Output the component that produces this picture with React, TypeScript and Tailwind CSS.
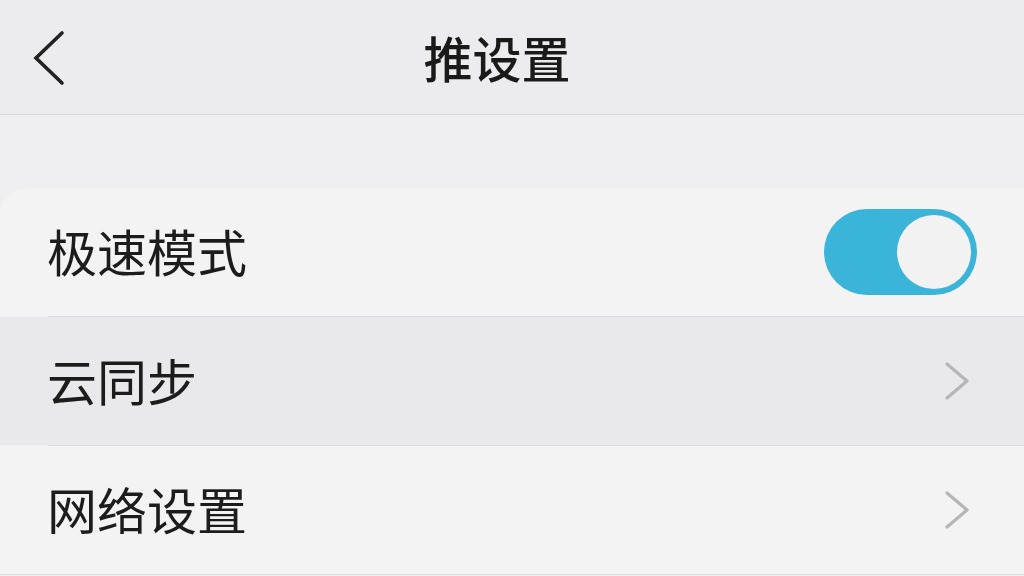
const font = { fontFamily: '"Noto Sans CJK SC", "Noto Sans", sans-serif' };

function Chevron() {
  return (
    <svg width="30" height="40" viewBox="0 0 30 40" className="mr-[3px]" fill="none">
      <polyline points="4,3 24,20 4,37" stroke="#b6b6b8" strokeWidth="3.2" strokeLinecap="round" strokeLinejoin="round" />
    </svg>
  );
}

function Row({ label, pressed, first, children }: { label: string; pressed?: boolean; first?: boolean; children: React.ReactNode }) {
  return (
    <div className={`h-[128px] flex items-center justify-between pl-[47px] pr-[48px] ${pressed ? "bg-[#e9e9eb]" : "bg-[#f3f3f3]"} ${first ? "rounded-tl-[28px]" : ""}`}>
      <span className="text-[50px] leading-none text-[#1c1c1c] -mt-[4px]">{label}</span>
      {children}
    </div>
  );
}

export default function App() {
  return (
    <div className="w-[1024px] h-[576px] overflow-hidden bg-[#efeff1] flex flex-col" style={font}>
      <header className="h-[115px] shrink-0 relative flex items-center justify-center bg-[#ececee] border-b border-[#d9d9db]">
        <svg width="40" height="60" viewBox="0 0 40 60" className="absolute left-[29px] top-[28px]" fill="none">
          <polyline points="33,5 7,30 33,55" stroke="#222" strokeWidth="3.6" strokeLinecap="round" strokeLinejoin="miter" />
        </svg>
        <h1 className="text-[49px] leading-none text-[#1a1a1a] font-medium -mt-[2px] -ml-[30px]">推设置</h1>
      </header>
      <div className="h-[73px] shrink-0" />
      <Row label="极速模式" first>
        <div className="w-[153px] h-[86px] rounded-full bg-[#3ab4d8] flex items-center justify-end pr-[6px] -mr-[1px]">
          <div className="w-[74px] h-[74px] rounded-full bg-[#f2f2f2]" />
        </div>
      </Row>
      <div className="h-px bg-[#dcdcde] ml-[48px]" />
      <Row label="云同步" pressed>
        <Chevron />
      </Row>
      <div className="h-px bg-[#dcdcde] ml-[48px]" />
      <Row label="网络设置">
        <Chevron />
      </Row>
      <div className="h-px bg-[#dcdcde]" />
    </div>
  );
}
